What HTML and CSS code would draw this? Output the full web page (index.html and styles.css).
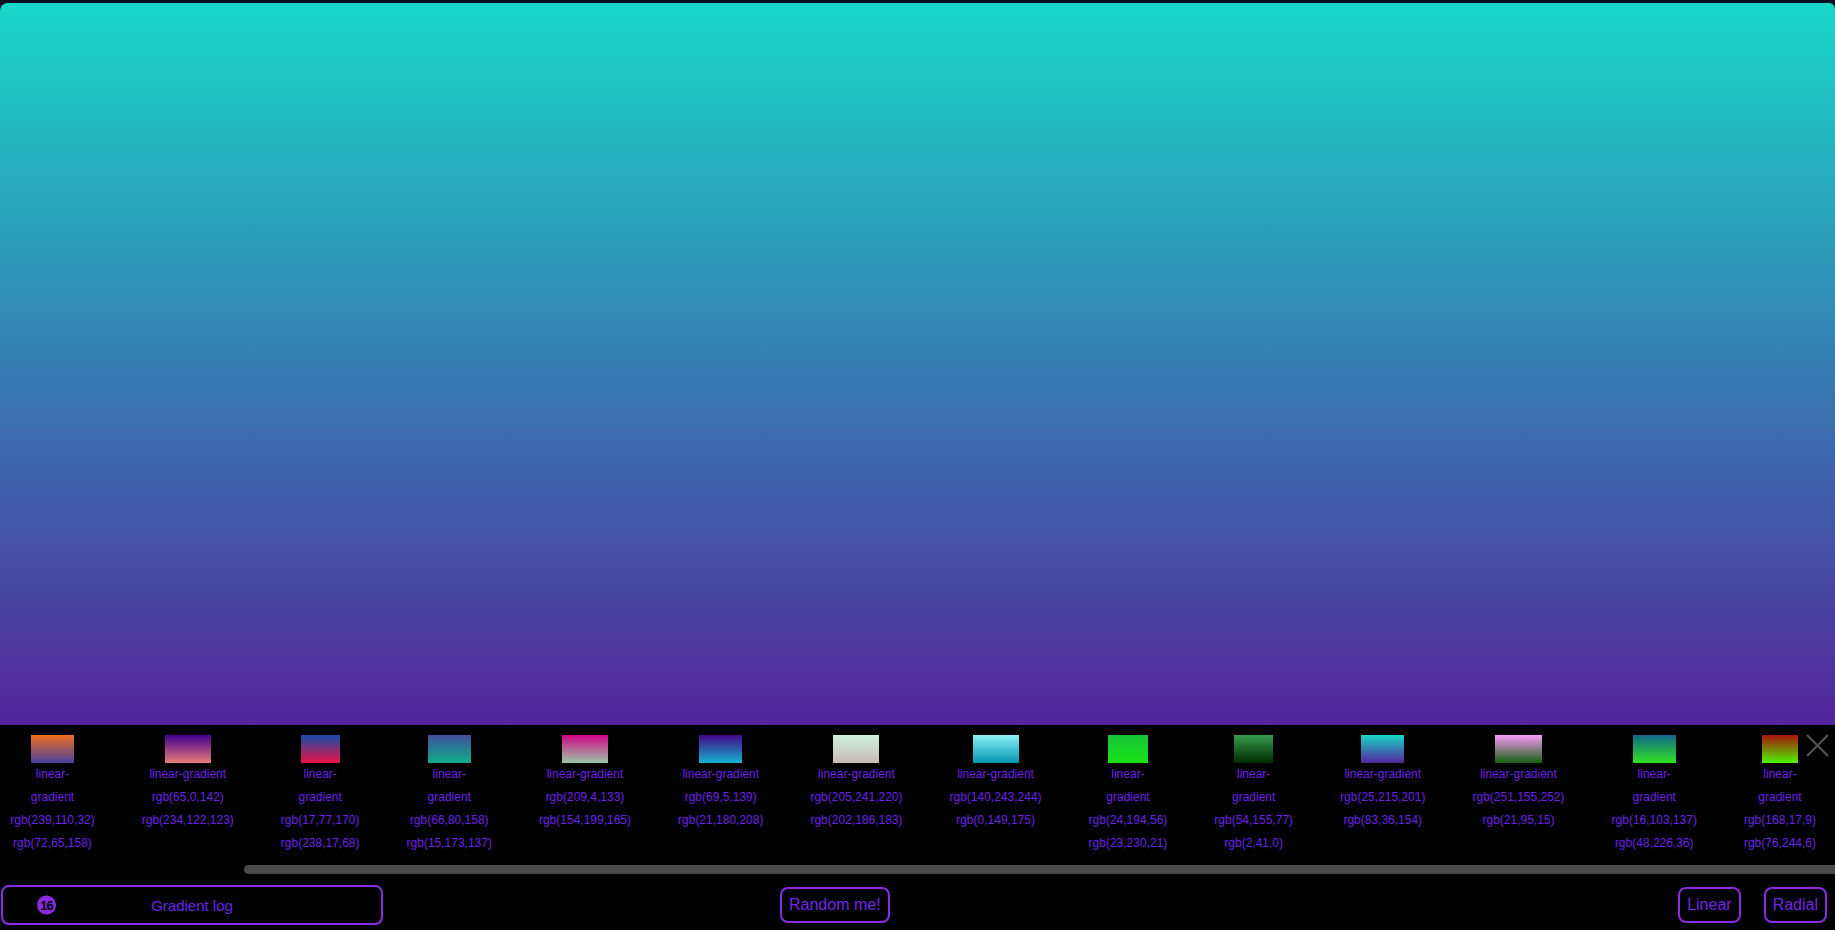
FILE: index.html
```html
<!DOCTYPE html>
<html>
	<head>
		<meta charset="UTF-8">
		<title>Gradient generator</title>
		<link rel="stylesheet" href="styles.css">
	</head>
	<body>
		<!-- current gradient -->
		<div class="preview" style="background: linear-gradient(rgb(25,215,201), rgb(83,36,154));"></div>

		<div class="log-panel">
			<!-- newest first, row-reverse keeps the newest on the right -->
			<div class="log">
				<div class="entry split">
					<div class="swatch" style="background: linear-gradient(rgb(168,17,9), rgb(76,244,6));"></div>
					<div class="kind">linear-gradient</div>
					<div>rgb(168,17,9)</div>
					<div>rgb(76,244,6)</div>
				</div>
				<div class="entry split">
					<div class="swatch" style="background: linear-gradient(rgb(16,103,137), rgb(48,226,36));"></div>
					<div class="kind">linear-gradient</div>
					<div>rgb(16,103,137)</div>
					<div>rgb(48,226,36)</div>
				</div>
				<div class="entry">
					<div class="swatch" style="background: linear-gradient(rgb(251,155,252), rgb(21,95,15));"></div>
					<div class="kind">linear-gradient</div>
					<div>rgb(251,155,252)</div>
					<div>rgb(21,95,15)</div>
				</div>
				<div class="entry">
					<div class="swatch" style="background: linear-gradient(rgb(25,215,201), rgb(83,36,154));"></div>
					<div class="kind">linear-gradient</div>
					<div>rgb(25,215,201)</div>
					<div>rgb(83,36,154)</div>
				</div>
				<div class="entry split">
					<div class="swatch" style="background: linear-gradient(rgb(54,155,77), rgb(2,41,0));"></div>
					<div class="kind">linear-gradient</div>
					<div>rgb(54,155,77)</div>
					<div>rgb(2,41,0)</div>
				</div>
				<div class="entry split">
					<div class="swatch" style="background: linear-gradient(rgb(24,194,56), rgb(23,230,21));"></div>
					<div class="kind">linear-gradient</div>
					<div>rgb(24,194,56)</div>
					<div>rgb(23,230,21)</div>
				</div>
				<div class="entry">
					<div class="swatch" style="background: linear-gradient(rgb(140,243,244), rgb(0,149,175));"></div>
					<div class="kind">linear-gradient</div>
					<div>rgb(140,243,244)</div>
					<div>rgb(0,149,175)</div>
				</div>
				<div class="entry">
					<div class="swatch" style="background: linear-gradient(rgb(205,241,220), rgb(202,186,183));"></div>
					<div class="kind">linear-gradient</div>
					<div>rgb(205,241,220)</div>
					<div>rgb(202,186,183)</div>
				</div>
				<div class="entry">
					<div class="swatch" style="background: linear-gradient(rgb(69,5,139), rgb(21,180,208));"></div>
					<div class="kind">linear-gradient</div>
					<div>rgb(69,5,139)</div>
					<div>rgb(21,180,208)</div>
				</div>
				<div class="entry">
					<div class="swatch" style="background: linear-gradient(rgb(209,4,133), rgb(154,199,165));"></div>
					<div class="kind">linear-gradient</div>
					<div>rgb(209,4,133)</div>
					<div>rgb(154,199,165)</div>
				</div>
				<div class="entry split">
					<div class="swatch" style="background: linear-gradient(rgb(66,80,158), rgb(15,173,137));"></div>
					<div class="kind">linear-gradient</div>
					<div>rgb(66,80,158)</div>
					<div>rgb(15,173,137)</div>
				</div>
				<div class="entry split">
					<div class="swatch" style="background: linear-gradient(rgb(17,77,170), rgb(238,17,68));"></div>
					<div class="kind">linear-gradient</div>
					<div>rgb(17,77,170)</div>
					<div>rgb(238,17,68)</div>
				</div>
				<div class="entry">
					<div class="swatch" style="background: linear-gradient(rgb(65,0,142), rgb(234,122,123));"></div>
					<div class="kind">linear-gradient</div>
					<div>rgb(65,0,142)</div>
					<div>rgb(234,122,123)</div>
				</div>
				<div class="entry split">
					<div class="swatch" style="background: linear-gradient(rgb(239,110,32), rgb(72,65,158));"></div>
					<div class="kind">linear-gradient</div>
					<div>rgb(239,110,32)</div>
					<div>rgb(72,65,158)</div>
				</div>
			</div>
			<!-- scroll position of the log -->
			<div class="scroll"><div class="thumb"></div></div>
			<a class="close" href="javascript:;">
				<svg width="23" height="23" viewBox="0 0 23 23">
					<path d="M1 1L22 22M22 1L1 22" stroke="#565656" stroke-width="2" fill="none"/>
				</svg>
			</a>
		</div>

		<div class="bar">
			<button class="log-toggle"><span class="count">16</span>Gradient log</button>
			<button class="btn random">Random me!</button>
			<div class="modes">
				<button class="btn">Linear</button>
				<button class="btn">Radial</button>
			</div>
		</div>
	</body>
</html>
```

FILE: styles.css
```css
*{
	margin: 0;
	padding: 0;
	box-sizing: border-box;
}
html, body{
	height: 100%;
}
body{
	background-color: #0a0f22;
	display: flex;
	flex-direction: column;
	overflow: hidden;
	font-family: "Liberation Sans", Arial, sans-serif;
}
.preview{
	flex: 1;
	margin-top: 3px;
	border-radius: 8px 6px 0 0;
}

/* gradient log */
.log-panel{
	position: relative;
	background-color: #000;
}
.log{
	display: flex;
	flex-direction: row-reverse;
	gap: 47px;
	overflow: hidden;
	padding: 10px 19px 10px 12px;
}
.entry{
	flex: none;
	width: min-content;
	text-align: center;
	font-size: 12px;
	line-height: 23px;
	color: #6c22e6;
}
.swatch{
	width: 50%;
	height: 28px;
	margin: 0 auto;
}
/* narrow entries break the label on the hyphen */
.split .kind{
	width: min-content;
	margin: 0 auto;
}
.scroll{
	display: flex;
	height: 9px;
}
.thumb{
	flex: 1;
	margin-left: 244px;
	background-color: #4a4a4a;
	border-radius: 5px 0 0 5px;
}
.close{
	position: absolute;
	top: 9px;
	right: 6px;
	width: 23px;
	height: 23px;
}
.close svg{
	display: block;
}

/* bottom bar */
.bar{
	display: flex;
	align-items: center;
	padding: 11px 8px 5px 1px;
	background-color: #000;
}
.log-toggle{
	position: relative;
	width: 382px;
	height: 40px;
	border: 2px solid #8a2be2;
	border-radius: 8px;
	background-color: #000;
	color: #6a24ea;
	font-family: "Liberation Sans", Arial, sans-serif;
	font-size: 15px;
}
.count{
	position: absolute;
	left: 34px;
	top: 50%;
	transform: translateY(-50%);
	width: 19px;
	height: 19px;
	border-radius: 50%;
	background-color: #8a2be2;
	color: #000;
	font-size: 13px;
	font-weight: bold;
	line-height: 19px;
	letter-spacing: -1px;
	text-align: center;
}
.btn{
	border: 2px solid #8a2be2;
	border-radius: 8px;
	background-color: #000;
	color: #7426e6;
	font-family: "Liberation Sans", Arial, sans-serif;
	font-size: 16px;
	padding: 7px 7px;
}
.random{
	margin-left: 397px;
}
.modes{
	margin-left: auto;
	display: flex;
	gap: 23px;
}
```
